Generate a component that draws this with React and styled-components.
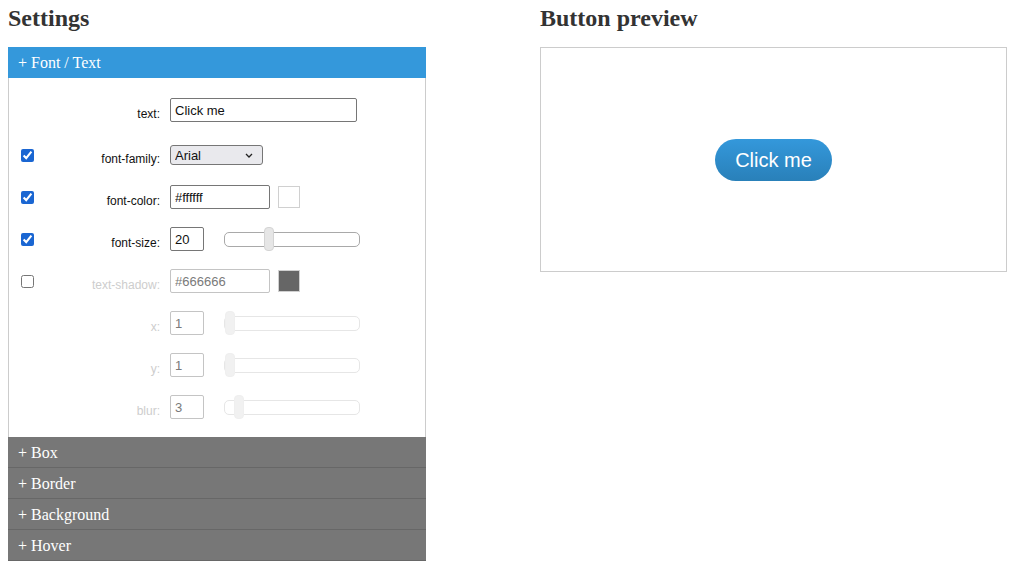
import React from 'react';
import styled, { createGlobalStyle } from 'styled-components';

const GlobalStyle = createGlobalStyle`
  body {
    margin: 0;
    background: #fff;
    font-family: "Liberation Sans", Arial, sans-serif;
  }
`;

const chevron =
  "url(\"data:image/svg+xml,%3Csvg xmlns='http://www.w3.org/2000/svg' width='8' height='5' viewBox='0 0 8 5'%3E%3Cpath d='M1 1l3 3 3-3' fill='none' stroke='%23222' stroke-width='1.3'/%3E%3C/svg%3E\")";

const Page = styled.div`
  display: flex;
  gap: 114px;
  padding: 4px 9px 0 8px;
`;

const LeftColumn = styled.div`
  width: 418px;
  flex-shrink: 0;
`;

const RightColumn = styled.div`
  flex: 1;
`;

const Heading = styled.h2`
  margin: 0 0 15px;
  font-family: "Liberation Serif", "Times New Roman", serif;
  font-size: 24px;
  line-height: 28px;
  font-weight: bold;
  color: #333;
`;

const SectionHeader = styled.div`
  height: ${(p) => (p.$open ? '31px' : '30px')};
  line-height: ${(p) => (p.$open ? '32px' : '31px')};
  padding-left: 10px;
  background: ${(p) => (p.$open ? '#3498db' : '#777')};
  border-bottom: ${(p) => (p.$open ? 'none' : '1px solid #676767')};
  color: #fff;
  font-family: "Liberation Serif", "Times New Roman", serif;
  font-size: 16px;
  cursor: pointer;
`;

const SectionBody = styled.div`
  border: 1px solid #ccc;
  border-top: none;
  border-bottom: none;
  padding: 11px 0 9px;
`;

const Row = styled.div`
  display: flex;
  align-items: center;
  height: 42px;
  padding-left: 12px;
  margin-bottom: ${(p) => (p.$extra ? '3px' : '0')};
`;

const CheckCell = styled.div`
  width: 13px;
  height: 13px;
  display: flex;
`;

const Check = styled.input.attrs({ type: 'checkbox' })`
  margin: 0;
  width: 13px;
  height: 13px;
  accent-color: #1a66d2;
`;

const Label = styled.label`
  width: 126px;
  text-align: right;
  font-size: 12px;
  padding-top: 7px;
  color: ${(p) => (p.$off ? '#cdcdcd' : '#111')};
`;

const TextInput = styled.input`
  box-sizing: border-box;
  margin: 0 0 0 10px;
  width: ${(p) => p.$w}px;
  height: 24px;
  padding: 1px 4px;
  border: 1px solid ${(p) => (p.disabled ? '#c4c4c4' : '#767676')};
  border-radius: 2px;
  background: #fff;
  font-family: "Liberation Sans", Arial, sans-serif;
  font-size: 13px;
  color: ${(p) => (p.disabled ? '#7a7a7a' : '#111')};
  outline: none;
`;

const Select = styled.select`
  -webkit-appearance: none;
  appearance: none;
  box-sizing: border-box;
  margin: 0 0 0 10px;
  width: 93px;
  height: 20px;
  padding: 0 4px;
  border: 1px solid #767676;
  border-radius: 3px;
  background: #e9e9ed ${chevron} no-repeat right 9px center;
  font-family: "Liberation Sans", Arial, sans-serif;
  font-size: 13px;
  color: #111;
`;

const Swatch = styled.div`
  width: 22px;
  height: 22px;
  margin-left: 8px;
  box-sizing: border-box;
  border: 1px solid #d0d0d0;
  background: ${(p) => p.$color};
`;

const Slider = styled.input.attrs({ type: 'range' })`
  -webkit-appearance: none;
  appearance: none;
  width: 136px;
  height: 24px;
  margin: 0 0 0 20px;
  background: transparent;

  &::-webkit-slider-runnable-track {
    box-sizing: border-box;
    height: 15px;
    border: 1px solid ${(p) => (p.disabled ? '#e6e6e6' : '#a9a9a9')};
    border-radius: 5px;
    background: #fff;
  }

  &::-webkit-slider-thumb {
    -webkit-appearance: none;
    box-sizing: border-box;
    width: 10px;
    height: 24px;
    margin-top: -5.5px;
    border-radius: 4px;
    border: 1px solid ${(p) => (p.disabled ? '#efefef' : '#d4d4d4')};
    background: ${(p) => (p.disabled ? '#f1f1f1' : '#e6e6e6')};
  }
`;

const PreviewBox = styled.div`
  height: 223px;
  border: 1px solid #ccc;
  display: flex;
  align-items: center;
  justify-content: center;
`;

const PreviewButton = styled.button`
  border: none;
  border-radius: 21px;
  padding: 9px 20px;
  line-height: 24px;
  font-family: "Liberation Sans", Arial, sans-serif;
  font-size: 20px;
  color: #fff;
  background: linear-gradient(to bottom, #3498db, #2980b9);
  cursor: pointer;
`;

const closedSections = ['Box', 'Border', 'Background', 'Hover'];

export default function App() {
  return (
    <>
      <GlobalStyle />
      <Page>
        <LeftColumn>
          <Heading>Settings</Heading>
          <SectionHeader $open>+ Font / Text</SectionHeader>
          <SectionBody>
            <Row $extra>
              <CheckCell />
              <Label>text:</Label>
              <TextInput $w={187} defaultValue="Click me" />
            </Row>
            <Row>
              <CheckCell><Check defaultChecked /></CheckCell>
              <Label>font-family:</Label>
              <Select defaultValue="Arial">
                <option>Arial</option>
                <option>Verdana</option>
                <option>Georgia</option>
              </Select>
            </Row>
            <Row>
              <CheckCell><Check defaultChecked /></CheckCell>
              <Label>font-color:</Label>
              <TextInput $w={100} defaultValue="#ffffff" />
              <Swatch $color="#ffffff" />
            </Row>
            <Row>
              <CheckCell><Check defaultChecked /></CheckCell>
              <Label>font-size:</Label>
              <TextInput $w={34} defaultValue="20" />
              <Slider min={6} max={50} defaultValue={20} />
            </Row>
            <Row>
              <CheckCell><Check /></CheckCell>
              <Label $off>text-shadow:</Label>
              <TextInput $w={100} defaultValue="#666666" disabled />
              <Swatch $color="#666666" />
            </Row>
            <Row>
              <CheckCell />
              <Label $off>x:</Label>
              <TextInput $w={34} defaultValue="1" disabled />
              <Slider min={1} max={40} defaultValue={1} disabled />
            </Row>
            <Row>
              <CheckCell />
              <Label $off>y:</Label>
              <TextInput $w={34} defaultValue="1" disabled />
              <Slider min={1} max={40} defaultValue={1} disabled />
            </Row>
            <Row>
              <CheckCell />
              <Label $off>blur:</Label>
              <TextInput $w={34} defaultValue="3" disabled />
              <Slider min={0} max={40} defaultValue={3} disabled />
            </Row>
          </SectionBody>
          {closedSections.map((name) => (
            <SectionHeader key={name}>+ {name}</SectionHeader>
          ))}
        </LeftColumn>
        <RightColumn>
          <Heading>Button preview</Heading>
          <PreviewBox>
            <PreviewButton>Click me</PreviewButton>
          </PreviewBox>
        </RightColumn>
      </Page>
    </>
  );
}
